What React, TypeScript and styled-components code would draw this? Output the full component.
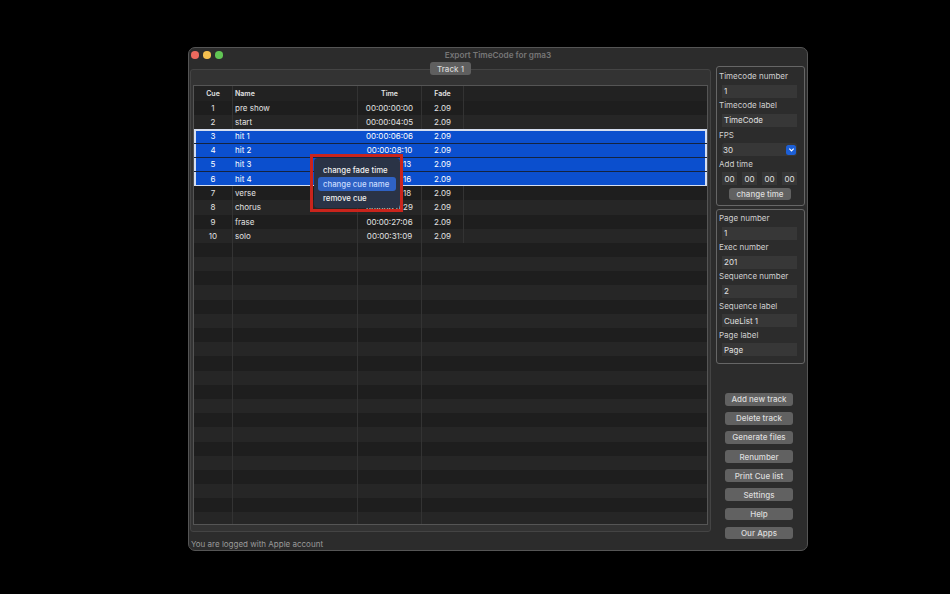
import React from "react";
import styled, { createGlobalStyle } from "styled-components";

interface ICue {
  cue: number;
  name: string;
  time: string;
}

const cues: ICue[] = [
  { cue: 1, name: "pre show", time: "00:00:00:00" },
  { cue: 2, name: "start", time: "00:00:04:05" },
  { cue: 3, name: "hit 1", time: "00:00:06:06" },
  { cue: 4, name: "hit 2", time: "00:00:08:10" },
  { cue: 5, name: "hit 3", time: "00:00:10:13" },
  { cue: 6, name: "hit 4", time: "00:00:12:16" },
  { cue: 7, name: "verse", time: "00:00:15:18" },
  { cue: 8, name: "chorus", time: "00:00:20:29" },
  { cue: 9, name: "frase", time: "00:00:27:06" },
  { cue: 10, name: "solo", time: "00:00:31:09" }
];

const EMPTY_ROWS = 20;
const actions = [
  "Add new track",
  "Delete track",
  "Generate files",
  "Renumber",
  "Print Cue list",
  "Settings",
  "Help",
  "Our Apps"
];

const Global = createGlobalStyle`
  html, body {
    margin: 0;
    height: 100%;
    background: #000;
    overflow: hidden;
    font-family: "Inter", "Liberation Sans", sans-serif;
    -webkit-font-smoothing: antialiased;
  }
`;

const Stage = styled.div`
  width: 950px;
  height: 594px;
  box-sizing: border-box;
  padding: 47px 142px 43px 188px;
`;

const Window = styled.div`
  height: 100%;
  box-sizing: border-box;
  background: #2c2c2c;
  border: 1px solid #555;
  border-radius: 7px;
  display: flex;
  flex-direction: column;
  overflow: hidden;
`;

const TitleBar = styled.div`
  height: 14px;
  flex: none;
  position: relative;
  display: flex;
  align-items: center;
  justify-content: center;
  color: #777;
  font-size: 8.2px;
  font-weight: 600;
`;

const Lights = styled.div`
  position: absolute;
  left: 2px;
  top: 3px;
  display: flex;
  gap: 4.5px;
`;

const Light = styled.span<{ color: string }>`
  width: 7.5px;
  height: 7.5px;
  border-radius: 50%;
  background: ${({ color }) => color};
`;

const Content = styled.div`
  flex: 1;
  min-height: 0;
  display: flex;
  gap: 5px;
  padding: 4px 2px 0 1px;
`;

const LeftColumn = styled.div`
  width: 521px;
  flex: none;
  display: flex;
  flex-direction: column;
`;

const TabBox = styled.div`
  position: relative;
  height: 463px;
  box-sizing: border-box;
  margin-top: 3px;
  padding: 15px 2px 6px 2px;
  background: #333;
  border: 1px solid #444;
  border-radius: 3px;
`;

const TrackTab = styled.div`
  position: absolute;
  left: 239px;
  top: -8px;
  width: 41px;
  height: 13px;
  border-radius: 3px;
  background: #5f5f5f;
  color: #d8d8d8;
  font-size: 8px;
  font-weight: 500;
  display: flex;
  align-items: center;
  justify-content: center;
`;

const Table = styled.div`
  position: relative;
  height: 440px;
  box-sizing: border-box;
  border: 1px solid #555;
  background: #1e1e1e;
  overflow: hidden;
`;

const Row = styled.div<{ $alt?: boolean; $selected?: boolean }>`
  display: grid;
  grid-template-columns: 39px 125px 64px 42px 1fr;
  height: 14.2px;
  box-sizing: border-box;
  color: #e2e2e2;
  font-size: 8px;
  background: ${({ $alt }) => ($alt ? "#262626" : "#1e1e1e")};
  ${({ $selected }) =>
    $selected &&
    `
    background: #0b4fce;
    color: #fff;
    border-bottom: 1.5px solid #14233f;
    box-shadow: inset 2px 0 0 #d5def0, inset -2px 0 0 #d5def0;
  `}
`;

const HeaderRow = styled(Row)`
  height: 15px;
  background: #222;
  font-weight: 600;
  font-size: 7px;
`;

const Cell = styled.div<{ $align?: string; $sep?: boolean; $selected?: boolean }>`
  display: flex;
  align-items: center;
  overflow: hidden;
  white-space: nowrap;
  box-sizing: border-box;
  padding: 0 2px;
  justify-content: ${({ $align }) => $align || "flex-start"};
  border-right: 1px solid ${({ $sep, $selected }) =>
    $selected || !$sep ? "transparent" : "#333"};
`;

const SelectionEdge = styled.div<{ $bottom?: boolean }>`
  height: 1.5px;
  margin: 0 0 -1.5px;
  position: relative;
  z-index: 1;
  background: #d5def0;
  ${({ $bottom }) => $bottom && "margin: -1.5px 0 0;"}
`;

const Menu = styled.div`
  position: absolute;
  left: 120px;
  top: 72px;
  width: 86px;
  height: 50px;
  box-sizing: border-box;
  padding: 5.5px 4px;
  border-radius: 4px;
  background: #2a3346;
  display: flex;
  flex-direction: column;
  z-index: 2;
`;

const MenuItem = styled.div<{ $active?: boolean }>`
  height: 13.7px;
  flex: none;
  display: flex;
  align-items: center;
  padding: 0 5px;
  border-radius: 3px;
  color: ${({ $active }) => ($active ? "#c9dcff" : "#f0f0f0")};
  background: ${({ $active }) => ($active ? "#2f62c4" : "transparent")};
  font-size: 7.8px;
  font-weight: 500;
  white-space: nowrap;
`;

const RedFrame = styled.div`
  position: absolute;
  left: 116px;
  top: 68px;
  width: 93px;
  height: 58px;
  box-sizing: border-box;
  border: 3px solid #c9241c;
  z-index: 3;
`;

const StatusBar = styled.div`
  color: #9a9a9a;
  font-size: 8px;
  padding: 7px 0 0 1px;
`;

const SideColumn = styled.div`
  flex: 1;
  display: flex;
  flex-direction: column;
  gap: 3px;
  min-width: 0;
`;

const GroupBox = styled.div<{ $height: number; $top: number }>`
  height: ${({ $height }) => $height}px;
  box-sizing: border-box;
  border: 1px solid #666;
  border-radius: 3px;
  padding: ${({ $top }) => $top}px 2px 0;
  display: flex;
  flex-direction: column;
`;

const Label = styled.div`
  color: #cfcfcf;
  font-size: 8px;
  height: 11px;
  line-height: 11px;
`;

const Field = styled.div`
  height: 13px;
  margin: 2.5px 5px 2.7px 3px;
  padding: 0 2px;
  background: #373737;
  color: #e0e0e0;
  font-size: 8px;
  display: flex;
  align-items: center;
`;

const Select = styled(Field)`
  border-radius: 3px;
  padding: 0 1px;
  justify-content: space-between;
`;

const SelectArrow = styled.span`
  width: 10px;
  height: 10px;
  border-radius: 2.5px;
  background: #1c5fd6;
  display: flex;
  align-items: center;
  justify-content: center;
`;

const TimeRow = styled.div`
  display: flex;
  justify-content: space-between;
  margin: 2.5px 5px 0 3px;
`;

const TimeField = styled.div`
  width: 15px;
  height: 13px;
  background: #373737;
  color: #e0e0e0;
  font-size: 8px;
  display: flex;
  align-items: center;
  justify-content: center;
`;

const PushButton = styled.button`
  display: block;
  width: 68px;
  height: 12.5px;
  padding: 0;
  border: none;
  border-radius: 3px;
  background: #616161;
  color: #dcdcdc;
  font-family: inherit;
  font-size: 8px;
  font-weight: 500;
`;

const ChangeTimeButton = styled(PushButton)`
  width: 62px;
  margin: 2.5px 0 0 10px;
`;

const ActionList = styled.div`
  display: flex;
  flex-direction: column;
  gap: 6.6px;
  padding: 26px 0 0 9px;
`;

const App = () => (
  <Stage>
    <Global />
    <Window>
      <TitleBar>
        <Lights>
          <Light color="#ec6a5e" />
          <Light color="#f4bf4f" />
          <Light color="#61c554" />
        </Lights>
        Export TimeCode for gma3
      </TitleBar>
      <Content>
        <LeftColumn>
          <TabBox>
            <TrackTab>Track 1</TrackTab>
            <Table>
              <HeaderRow>
                <Cell $align="center" $sep>Cue</Cell>
                <Cell $sep>Name</Cell>
                <Cell $align="center" $sep>Time</Cell>
                <Cell $align="center" $sep>Fade</Cell>
                <Cell />
              </HeaderRow>
              {cues.map((c, i) => {
                const selected = c.cue >= 3 && c.cue <= 6;
                return (
                  <React.Fragment key={c.cue}>
                    {c.cue === 3 && <SelectionEdge />}
                    <Row $alt={i % 2 === 1} $selected={selected}>
                      <Cell $align="center" $sep $selected={selected}>{c.cue}</Cell>
                      <Cell $sep $selected={selected}>{c.name}</Cell>
                      <Cell $align="center" $sep $selected={selected}>{c.time}</Cell>
                      <Cell $align="center" $sep $selected={selected}>2.09</Cell>
                      <Cell />
                    </Row>
                    {c.cue === 6 && <SelectionEdge $bottom />}
                  </React.Fragment>
                );
              })}
              {Array.from({ length: EMPTY_ROWS }).map((_, i) => (
                <Row key={i} $alt={i % 2 === 1}>
                  <Cell $sep />
                  <Cell $sep />
                  <Cell $sep />
                  <Cell />
                  <Cell />
                </Row>
              ))}
              <Menu>
                <MenuItem>change fade time</MenuItem>
                <MenuItem $active>change cue name</MenuItem>
                <MenuItem>remove cue</MenuItem>
              </Menu>
              <RedFrame />
            </Table>
          </TabBox>
          <StatusBar>You are logged with Apple account</StatusBar>
        </LeftColumn>
        <SideColumn>
          <GroupBox $height={140} $top={4.2}>
            <Label>Timecode number</Label>
            <Field>1</Field>
            <Label>Timecode label</Label>
            <Field>TimeCode</Field>
            <Label>FPS</Label>
            <Select>
              30
              <SelectArrow>
                <svg width="7" height="7" viewBox="0 0 8 8">
                  <path d="M1.5 3 L4 5.5 L6.5 3" fill="none" stroke="#fff" strokeWidth="1.4" />
                </svg>
              </SelectArrow>
            </Select>
            <Label>Add time</Label>
            <TimeRow>
              <TimeField>00</TimeField>
              <TimeField>00</TimeField>
              <TimeField>00</TimeField>
              <TimeField>00</TimeField>
            </TimeRow>
            <ChangeTimeButton>change time</ChangeTimeButton>
          </GroupBox>
          <GroupBox $height={155} $top={3}>
            <Label>Page number</Label>
            <Field>1</Field>
            <Label>Exec number</Label>
            <Field>201</Field>
            <Label>Sequence number</Label>
            <Field>2</Field>
            <Label>Sequence label</Label>
            <Field>CueList 1</Field>
            <Label>Page label</Label>
            <Field>Page</Field>
          </GroupBox>
          <ActionList>
            {actions.map(a => (
              <PushButton key={a}>{a}</PushButton>
            ))}
          </ActionList>
        </SideColumn>
      </Content>
    </Window>
  </Stage>
);

export default App;
